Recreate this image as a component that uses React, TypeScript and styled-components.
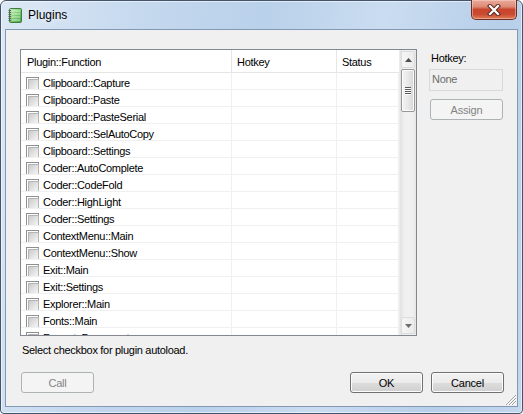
import styled, { createGlobalStyle } from 'styled-components';

const GlobalStyle = createGlobalStyle`
  html, body {
    margin: 0;
    padding: 0;
    background: #ffffff;
    overflow: hidden;
  }
  * {
    box-sizing: border-box;
  }
`;

const Window = styled.div`
  width: 523px;
  height: 414px;
  display: flex;
  flex-direction: column;
  border: 1px solid #44546a;
  border-radius: 6px 6px 4px 4px;
  padding: 0 4px 6px 4px;
  background: linear-gradient(100deg, #dce8f5 0%, #c4d8ee 25%, #b9d1ea 45%, #cadcf0 65%, #b7cfe9 85%, #c3d7ed 100%);
  box-shadow: inset 0 0 0 1px rgba(255, 255, 255, 0.55);
  font-family: 'Liberation Sans', Arial, sans-serif;
  font-size: 11px;
  letter-spacing: -0.3px;
  color: #000;
`;

const TitleBar = styled.div`
  height: 28px;
  flex: none;
  display: flex;
  align-items: center;
  padding-left: 3px;
`;

const Title = styled.span`
  font-size: 12px;
  letter-spacing: 0;
  margin-left: 5px;
  color: #000;
  text-shadow: 0 0 6px rgba(255, 255, 255, 0.9);
`;

const CloseButton = styled.div`
  margin-left: auto;
  margin-right: 1px;
  align-self: flex-start;
  margin-top: -1px;
  width: 46px;
  height: 20px;
  border: 1px solid #6b2f25;
  border-top: none;
  border-radius: 0 0 5px 5px;
  background: linear-gradient(#eaaa9b 0%, #de8b76 35%, #c8452c 50%, #c94b31 75%, #e07a56 100%);
  box-shadow: inset 0 0 0 1px rgba(255, 220, 210, 0.45);
  display: flex;
  align-items: center;
  justify-content: center;
`;

const Client = styled.div`
  flex: 1;
  position: relative;
  display: flex;
  flex-direction: column;
  background: #f0f0f0;
  border: 1px solid #8298b4;
  padding: 19px 13px 0 14px;
`;

const MainRow = styled.div`
  display: flex;
  gap: 12px;
`;

const ListBox = styled.div`
  width: 397px;
  height: 287px;
  border: 1px solid #828790;
  background: #fff;
  display: flex;
  overflow: hidden;
`;

const Grid = styled.div`
  flex: 1;
  overflow: hidden;
`;

const HeaderRow = styled.div`
  display: grid;
  grid-template-columns: 211px 105px 62px;
  height: 23px;
  border-bottom: 1px solid #e5e5e5;
`;

const HeaderCell = styled.div<{ $pad: number }>`
  display: flex;
  align-items: center;
  padding-top: 2px;
  padding-left: ${(p) => p.$pad}px;
  border-right: 1px solid #e5e5e5;
  &:last-child {
    border-right: none;
  }
`;

const Row = styled.div`
  display: grid;
  grid-template-columns: 211px 105px 62px;
  height: 17px;
  border-bottom: 1px solid #f0f0f0;
`;

const Cell = styled.div`
  display: flex;
  align-items: flex-start;
  border-right: 1px solid #f0f0f0;
  white-space: nowrap;
  overflow: hidden;
`;

const NameCell = styled(Cell)`
  padding: 4px 0 0 5px;
  gap: 4px;
`;

const NameText = styled.span`
  line-height: 13px;
`;

const Check = styled.span`
  flex: none;
  width: 13px;
  height: 13px;
  border: 1px solid #8f8f8f;
  background: #fff;
  padding: 1px;
  &::after {
    content: '';
    display: block;
    width: 100%;
    height: 100%;
    border: 1px solid #b4b4b4;
    background: linear-gradient(135deg, #cacaca 0%, #e3e3e3 55%, #f5f5f5 100%);
  }
`;

const Scrollbar = styled.div`
  width: 17px;
  flex: none;
  display: flex;
  flex-direction: column;
  background: linear-gradient(to right, #e2e2e2 0%, #f0f0f0 30%, #f0f0f0 80%, #e6e6e6 100%);
  border-left: 1px solid #ececec;
`;

const ArrowButton = styled.div`
  height: 17px;
  margin: 1px 1px;
  flex: none;
  border: 1px solid #dcdcdc;
  border-radius: 2px;
  background: linear-gradient(to right, #f6f6f6, #ebebeb);
  display: flex;
  align-items: center;
  justify-content: center;
`;

const Thumb = styled.div`
  height: 43px;
  margin: 0 1px;
  border: 1px solid #979797;
  border-radius: 2px;
  background: linear-gradient(to right, #f3f3f3 0%, #e8e8e8 50%, #d6d6d6 100%);
  box-shadow: inset 0 0 0 1px #fbfbfb;
  display: flex;
  flex-direction: column;
  align-items: center;
  justify-content: center;
  gap: 1px;
`;

const GripLine = styled.span`
  width: 6px;
  height: 1px;
  background: #5c5c5c;
  box-shadow: 0 1px 0 #fff;
`;

const Spacer = styled.div`
  flex: 1;
`;

const SidePanel = styled.div`
  width: 74px;
  padding-top: 2px;
  display: flex;
  flex-direction: column;
`;

const Label = styled.div`
  line-height: 15px;
  padding-left: 2px;
`;

const TextBox = styled.div`
  margin-top: 3px;
  height: 22px;
  border: 1px solid #d9d9d9;
  background: #f0f0f0;
  color: #6d6d6d;
  padding: 3px 2px;
`;

const Button = styled.button`
  width: 73px;
  height: 21px;
  font-family: inherit;
  font-size: 11px;
  letter-spacing: -0.2px;
  border-radius: 3px;
  padding: 0;
  border: 1px solid #707070;
  color: #000;
  background: linear-gradient(#f2f2f2 0%, #ebebeb 50%, #dddddd 51%, #cfcfcf 100%);
  box-shadow: inset 0 0 0 1px #fcfcfc;
  &:disabled {
    border-color: #adb2b5;
    background: #f4f4f4;
    color: #838383;
    box-shadow: none;
  }
`;

const AssignButton = styled(Button)`
  margin-top: 8px;
  margin-left: 1px;
`;

const Hint = styled.div`
  margin-top: 7px;
  line-height: 15px;
  padding-left: 2px;
`;

const ButtonRow = styled.div`
  margin-top: 14px;
  display: flex;
  gap: 8px;
  padding-left: 1px;
`;

const CallButton = styled(Button)`
  margin-right: auto;
`;

const Grip = styled.svg`
  position: absolute;
  right: 1px;
  bottom: 1px;
`;

const plugins = [
  'Clipboard::Capture',
  'Clipboard::Paste',
  'Clipboard::PasteSerial',
  'Clipboard::SelAutoCopy',
  'Clipboard::Settings',
  'Coder::AutoComplete',
  'Coder::CodeFold',
  'Coder::HighLight',
  'Coder::Settings',
  'ContextMenu::Main',
  'ContextMenu::Show',
  'Exit::Main',
  'Exit::Settings',
  'Explorer::Main',
  'Fonts::Main',
  'Format::Document',
];

const NotepadIcon = () => (
  <svg width="15" height="17" viewBox="0 0 15 17">
    <defs>
      <linearGradient id="pad" x1="0" y1="0" x2="1" y2="1">
        <stop offset="0" stopColor="#c9efc0" />
        <stop offset="0.5" stopColor="#7ccf72" />
        <stop offset="1" stopColor="#3f9f3f" />
      </linearGradient>
    </defs>
    <rect x="1.5" y="1.5" width="12" height="14" rx="1" fill="url(#pad)" stroke="#3d7d3d" />
    {[4, 7, 10, 13].map((y) => (
      <line key={y} x1="4" y1={y} x2="12" y2={y} stroke="#e8f8e4" strokeWidth="1" opacity="0.8" />
    ))}
    {[3, 5, 7, 9, 11, 13].map((y) => (
      <rect key={y} x="0.5" y={y} width="2.5" height="1" fill="#5a5a5a" />
    ))}
  </svg>
);

const App = () => (
  <>
    <GlobalStyle />
    <Window>
      <TitleBar>
        <NotepadIcon />
        <Title>Plugins</Title>
        <CloseButton>
          <svg width="14" height="12" viewBox="0 0 14 12">
            <path d="M3 2 L11 10 M11 2 L3 10" stroke="#5a2a20" strokeWidth="4.2" strokeLinecap="square" />
            <path d="M3 2 L11 10 M11 2 L3 10" stroke="#ffffff" strokeWidth="2.2" strokeLinecap="square" />
          </svg>
        </CloseButton>
      </TitleBar>
      <Client>
        <MainRow>
          <ListBox>
            <Grid>
              <HeaderRow>
                <HeaderCell $pad={6}>Plugin::Function</HeaderCell>
                <HeaderCell $pad={5}>Hotkey</HeaderCell>
                <HeaderCell $pad={5}>Status</HeaderCell>
              </HeaderRow>
              {plugins.map((name) => (
                <Row key={name}>
                  <NameCell>
                    <Check />
                    <NameText>{name}</NameText>
                  </NameCell>
                  <Cell />
                  <Cell />
                </Row>
              ))}
            </Grid>
            <Scrollbar>
              <ArrowButton>
                <svg width="7" height="4" viewBox="0 0 7 4">
                  <path d="M3.5 0 L7 4 L0 4 Z" fill="#4d4d4d" />
                </svg>
              </ArrowButton>
              <Thumb>
                <GripLine />
                <GripLine />
                <GripLine />
                <GripLine />
              </Thumb>
              <Spacer />
              <ArrowButton>
                <svg width="7" height="4" viewBox="0 0 7 4">
                  <path d="M0 0 L7 0 L3.5 4 Z" fill="#6d6d6d" />
                </svg>
              </ArrowButton>
            </Scrollbar>
          </ListBox>
          <SidePanel>
            <Label>Hotkey:</Label>
            <TextBox>None</TextBox>
            <AssignButton disabled>Assign</AssignButton>
          </SidePanel>
        </MainRow>
        <Hint>Select checkbox for plugin autoload.</Hint>
        <ButtonRow>
          <CallButton disabled>Call</CallButton>
          <Button>OK</Button>
          <Button>Cancel</Button>
        </ButtonRow>
        <Grip width="11" height="11" viewBox="0 0 11 11">
          {[3, 6, 9].map((o) => (
            <g key={o}>
              <line x1={11 - o} y1="11" x2="11" y2={11 - o} stroke="#ffffff" strokeWidth="1" />
              <line x1={10 - o} y1="11" x2="11" y2={10 - o} stroke="#a0a0a0" strokeWidth="1" />
            </g>
          ))}
        </Grip>
      </Client>
    </Window>
  </>
);

export default App;
